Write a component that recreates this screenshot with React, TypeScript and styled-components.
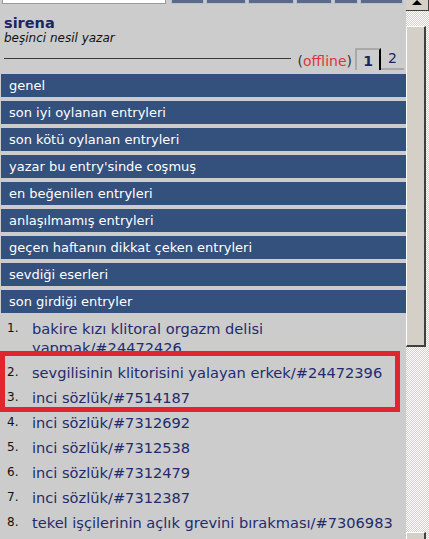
import React from "react";
import styled, { createGlobalStyle } from "styled-components";

const Global = createGlobalStyle`
  html, body { margin: 0; padding: 0; }
  body {
    width: 429px;
    height: 539px;
    overflow: hidden;
    background: #cccccc;
    font-family: "DejaVu Sans", Verdana, sans-serif;
  }
`;

const Page = styled.div`
  display: flex;
  width: 429px;
  height: 539px;
  overflow: hidden;
`;

const Main = styled.div`
  width: 406px;
  display: flex;
  flex-direction: column;
`;

const Toolbar = styled.div`
  display: flex;
  align-items: flex-end;
  height: 4px;
  padding-left: 2px;
  overflow: hidden;
`;

const SearchBox = styled.div`
  width: 162px;
  height: 3px;
  background: #ffffff;
  border: 1px solid #9a9a9a;
  border-top: none;
  margin-right: 5px;
`;

const ToolButton = styled.div<{ $w: number }>`
  width: ${(p) => p.$w}px;
  height: 4px;
  margin-right: 2px;
  background: #5b6a89;
  box-sizing: border-box;
  border: 1px solid #b8c0d2;
  border-top: none;
`;

const Header = styled.div`
  padding: 11px 0 0 4px;
`;

const Name = styled.div`
  font-size: 14.5px;
  line-height: 16px;
  font-weight: bold;
  color: #1b2566;
`;

const Title = styled.div`
  font-size: 12px;
  line-height: 15px;
  font-style: italic;
  color: #111111;
`;

const TabRow = styled.div`
  display: flex;
  align-items: center;
  height: 22px;
  margin-top: 2px;
  padding: 0 2px 0 4px;
`;

const Rule = styled.div`
  flex: 1;
  height: 1px;
  background: #3a3a3a;
  margin: 0 7px 2px 0;
`;

const Status = styled.span`
  font-size: 14px;
  line-height: 16px;
  color: #333333;
  margin-right: 3px;
  padding-top: 3px;
`;

const Offline = styled.span`
  color: #e0343a;
`;

const Tab = styled.div<{ $active?: boolean }>`
  box-sizing: border-box;
  height: 22px;
  display: flex;
  align-items: center;
  justify-content: center;
  font-size: 14px;
  color: #1b2566;
  font-weight: ${(p) => (p.$active ? "bold" : "normal")};
  width: ${(p) => (p.$active ? 26 : 23)}px;
  border-top: ${(p) => (p.$active ? "2px solid #a9a9a9" : "none")};
  border-left: ${(p) => (p.$active ? "2px solid #a9a9a9" : "none")};
  border-right: ${(p) => (p.$active ? "2px solid #000000" : "none")};
  border-bottom: ${(p) => (p.$active ? "none" : "2px solid #a9a9a9")};
  padding-top: ${(p) => (p.$active ? 1 : 0)}px;
`;

const Bars = styled.div`
  display: flex;
  flex-direction: column;
  gap: 4px;
  margin-top: 4px;
  padding-left: 1px;
`;

const Bar = styled.div`
  height: 23px;
  background: #34507d;
  color: #ffffff;
  font-size: 13px;
  line-height: 23px;
  padding-left: 8px;
  white-space: nowrap;
`;

const List = styled.div`
  display: flex;
  flex-direction: column;
  margin-top: 3px;
`;

const Row = styled.div`
  display: flex;
  align-items: flex-start;
  padding: 3px 0 3px 7px;
`;

const Num = styled.span`
  width: 25px;
  flex: none;
  font-size: 12px;
  line-height: 18px;
  color: #111111;
`;

const Entry = styled.span`
  flex: 1;
  font-size: 14.6px;
  line-height: 19px;
  color: #1f2b6c;
  padding-right: 6px;
`;

const Highlight = styled.div`
  position: relative;
  width: 400px;
  margin-top: -9px;
  padding-top: 9px;
  background: #cccccc;
  &::after {
    content: "";
    position: absolute;
    left: 0;
    top: 0;
    right: 0;
    bottom: -2px;
    border: 5px solid #e1252e;
    pointer-events: none;
  }
`;

const Scrollbar = styled.div`
  width: 23px;
  display: flex;
  flex-direction: column;
  background: repeating-conic-gradient(#d4d0c8 0 25%, #ffffff 0 50%) 0 0 / 2px 2px;
`;

const ArrowButton = styled.div`
  height: 10px;
  background: #d4d0c8;
  border-bottom: 1px solid #404040;
  border-right: 1px solid #404040;
  display: flex;
  justify-content: center;
  align-items: flex-start;
`;

const Arrow = styled.div`
  width: 0;
  height: 0;
  border-left: 5px solid transparent;
  border-right: 5px solid transparent;
  border-bottom: 5px solid #000000;
  margin-right: 1px;
`;

const Thumb = styled.div`
  margin-top: 15px;
  margin-right: 3px;
  height: 321px;
  box-sizing: border-box;
  background: #d4d0c8;
  border-top: 1px solid #ffffff;
  border-left: 1px solid #ffffff;
  border-right: 2px solid #404040;
  border-bottom: 2px solid #404040;
`;

const Spacer = styled.div`
  flex: 1;
`;

const BottomButton = styled.div`
  height: 6px;
  margin-right: 3px;
  background: #d4d0c8;
  border-top: 1px solid #ffffff;
  border-left: 1px solid #ffffff;
  border-right: 2px solid #404040;
`;

const toolButtons = [33, 40, 46, 36, 24, 43];

const bars = [
  "genel",
  "son iyi oylanan entryleri",
  "son kötü oylanan entryleri",
  "yazar bu entry'sinde coşmuş",
  "en beğenilen entryleri",
  "anlaşılmamış entryleri",
  "geçen haftanın dikkat çeken entryleri",
  "sevdiği eserleri",
  "son girdiği entryler",
];

const entries = [
  "bakire kızı klitoral orgazm delisi yapmak/#24472426",
  "sevgilisinin klitorisini yalayan erkek/#24472396",
  "inci sözlük/#7514187",
  "inci sözlük/#7312692",
  "inci sözlük/#7312538",
  "inci sözlük/#7312479",
  "inci sözlük/#7312387",
  "tekel işçilerinin açlık grevini bırakması/#7306983",
];

const Item = ({ n, text }: { n: number; text: string }) => (
  <Row>
    <Num>{n}.</Num>
    <Entry>{text}</Entry>
  </Row>
);

export default function App() {
  return (
    <>
      <Global />
      <Page>
        <Main>
          <Toolbar>
            <SearchBox />
            {toolButtons.map((w, i) => (
              <ToolButton key={i} $w={w} />
            ))}
          </Toolbar>
          <Header>
            <Name>sirena</Name>
            <Title>beşinci nesil yazar</Title>
          </Header>
          <TabRow>
            <Rule />
            <Status>
              (<Offline>offline</Offline>)
            </Status>
            <Tab $active>1</Tab>
            <Tab>2</Tab>
          </TabRow>
          <Bars>
            {bars.map((b) => (
              <Bar key={b}>{b}</Bar>
            ))}
          </Bars>
          <List>
            <Item n={1} text={entries[0]} />
            <Highlight>
              <Item n={2} text={entries[1]} />
              <Item n={3} text={entries[2]} />
            </Highlight>
            {entries.slice(3).map((e, i) => (
              <Item key={e} n={i + 4} text={e} />
            ))}
          </List>
        </Main>
        <Scrollbar>
          <ArrowButton>
            <Arrow />
          </ArrowButton>
          <Thumb />
          <Spacer />
          <BottomButton />
        </Scrollbar>
      </Page>
    </>
  );
}
